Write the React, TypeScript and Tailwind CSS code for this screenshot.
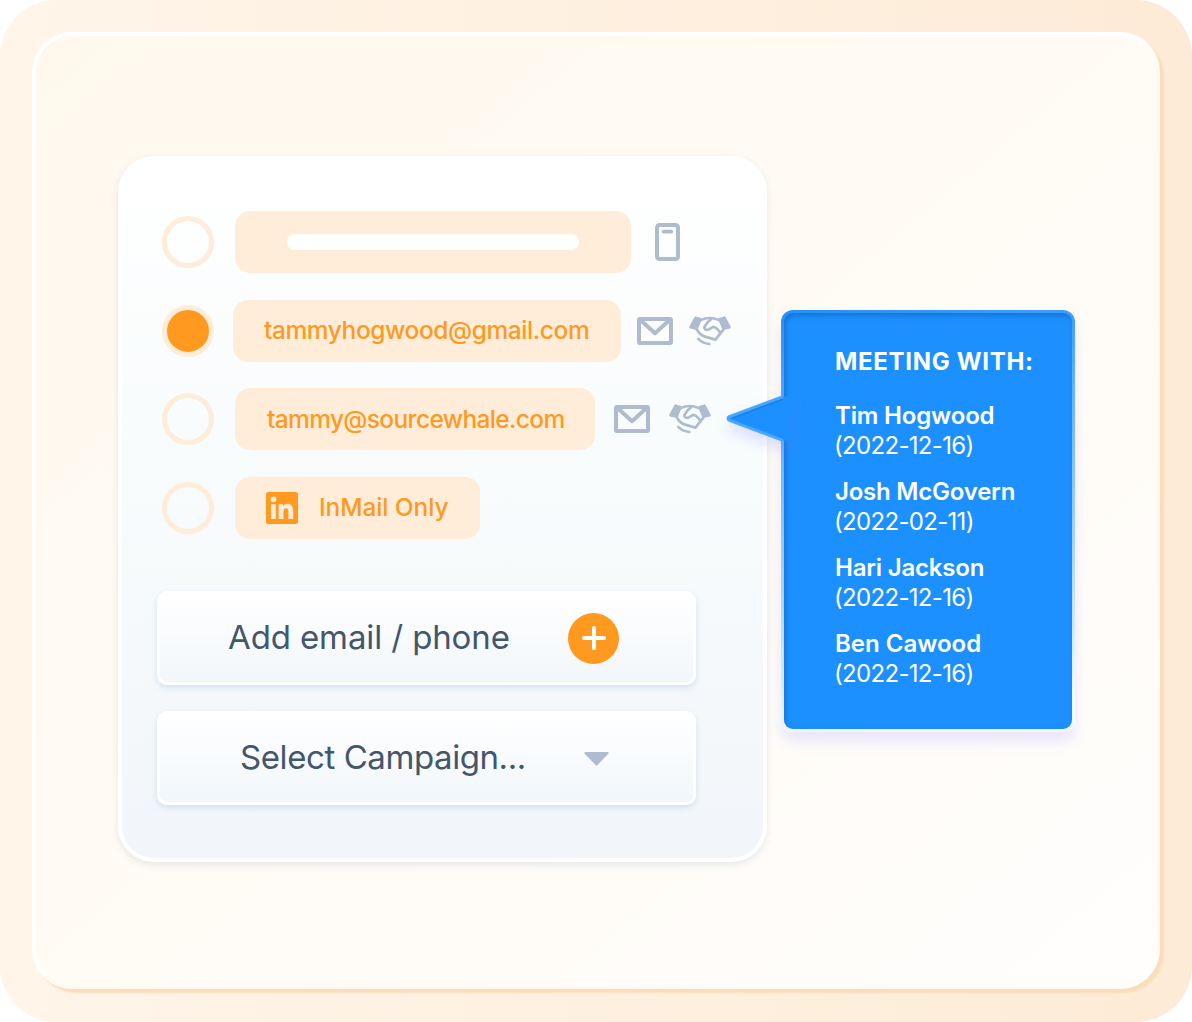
import React from 'react';

const icon = '#afbccf';

function Phone() {
  return (
    <svg className="block h-[38px] w-[25px]" viewBox="0 0 25 38" fill="none" stroke={icon}>
      <rect x="2" y="2" width="21" height="34" rx="2.5" strokeWidth="4" />
      <path d="M8.6 8.6h7.6" strokeWidth="3.8" strokeLinecap="round" />
    </svg>
  );
}

function Mail() {
  return (
    <svg className="block h-[28px] w-[36px]" viewBox="0 0 36 28" fill="none" stroke={icon} strokeWidth="4" strokeLinejoin="round">
      <rect x="2" y="2" width="32" height="24" rx="1" />
      <path d="M4 3.5l14 12.7L32 3.5" />
    </svg>
  );
}

function Handshake() {
  return (
    <svg className="block h-[30px] w-[42px]" viewBox="0 0 42 30" fill="none" stroke={icon} strokeWidth="2.5" strokeLinecap="round" strokeLinejoin="round">
      <path d="M6.6 1.6L11.6 3.2L7.6 12.8L1.4 11.2Z" fill={icon} />
      <path d="M35.4 1.6L30.4 3.2L34.4 12.8L40.6 11.2Z" fill={icon} />
      <path d="M11.8 4.2Q16 2 20.5 2T30 4.2" />
      <path d="M21.8 3.4Q19 5.4 15.8 10.2c-1.4 2.8 1.6 4.4 4 3.2l4.4-2.6c3.2-.4 4.2 2.6 6.8 5.4" strokeWidth="2.7" />
      <path d="M7.8 13.4C9.6 17 13 19.6 16 20.6L26.4 23.6L34.4 13.6" strokeWidth="2.7" />
      <path d="M9.2 22.8c3.1 3.2 6.6 4.6 11.2 5.2" />
    </svg>
  );
}

function Radio({ selected = false }: { selected?: boolean }) {
  return (
    <div className={selected ? 'size-[52px] shrink-0 rounded-full border-[5px] border-[#ffedda] bg-[#ff991f]' : 'size-[52px] shrink-0 rounded-full border-[5px] border-[#ffedda]'} />
  );
}

const pill = 'flex h-[62px] items-center rounded-[15px] bg-[#ffedda] text-[24.5px] font-medium text-[#ff991f]';
const field = 'flex h-[94px] w-[539px] items-center rounded-[10px] border-[3px] border-white bg-linear-to-b from-white to-[#f2f7fb] text-[33px] text-[#44566c] shadow-[0_3px_6px_rgba(150,185,220,0.35)]';

const meetings = [
  { name: 'Tim Hogwood', date: '(2022-12-16)', nameClass: 'tracking-[-0.17px]' },
  { name: 'Josh McGovern', date: '(2022-02-11)', nameClass: 'tracking-[-0.22px]' },
  { name: 'Hari Jackson', date: '(2022-12-16)', nameClass: 'tracking-[-0.2px]' },
  { name: 'Ben Cawood', date: '(2022-12-16)', nameClass: 'tracking-[0px]' },
];

function MeetingCallout() {
  return (
    <aside className="absolute top-[310px] left-[781px] h-[422px] w-[294px] rounded-[12px] bg-[linear-gradient(170deg,#258ffb_0%,#60aeff_25%,#a9d3ff_60%,#f4f9ff_92%)] p-[3px] shadow-[0_10px_14px_rgba(105,110,255,0.15)]">
      <div className="h-full rounded-[9px] bg-[#1d90ff] pt-[34px] pl-[51px] text-[24px] leading-[30px] text-white shadow-[inset_2px_3px_5px_rgba(0,75,145,0.36)]">
        <h2 className="mb-[24px] h-[30px] whitespace-nowrap font-bold"><span className="tracking-[0.68px]">MEETING WITH:</span></h2>
        <div className="flex flex-col gap-4">
          {meetings.map((m) => (
            <div key={m.name} className="whitespace-nowrap">
              <div className="font-semibold"><span className={m.nameClass}>{m.name}</span></div>
              <div className="-ml-px"><span className="tracking-[-0.68px]">{m.date}</span></div>
            </div>
          ))}
        </div>
      </div>
      <svg className="absolute top-[82px] left-[-56px] h-[62px] w-[68px] overflow-visible drop-shadow-[0_8px_7px_rgba(105,110,255,0.2)]" viewBox="0 0 68 62" fill="none">
        <path d="M58 4.6L4.5 24.5Q1.5 26.5 4.5 28.5L58 48.4H67V4.6Z" fill="#1d90ff" />
        <path d="M58 6.5L7 25.5" stroke="#0c75d8" strokeOpacity="0.45" strokeWidth="3" />
        <path d="M58 4.6L4.5 24.5Q1.5 26.5 4.5 28.5L58 48.4" stroke="#4ba6ff" strokeWidth="3" />
      </svg>
    </aside>
  );
}

export default function App() {
  return (
    <main className="relative h-[1022px] w-[1192px] overflow-hidden bg-white font-['Inter',sans-serif]">
      <div className="h-full rounded-[56px] bg-linear-to-r from-[#fff5e9] to-[#fdebd7] p-8">
        <section className="h-[957px] w-[1128px] rounded-[40px] border-[4px] border-t-white border-r-transparent border-b-transparent border-l-white bg-linear-to-br from-[#fff8ed] to-[#fffefd] px-[82px] pt-[120px] shadow-[4px_4px_2px_#f8debb]">
          <div className="h-[706px] w-[649px] rounded-[36px] border-[4px] border-t-[3px] border-white bg-linear-to-b from-white via-[#f7fbfc] to-[#f2f6fa] pt-[51px] pl-[35px] shadow-[0_3px_7px_rgba(80,120,150,0.15)]">
            <div className="flex flex-col gap-[26px] pl-[5px]">
              <div className="flex h-[63px] items-center">
                <Radio />
                <div className={`${pill} ml-[21px] w-[396px] justify-center`}><div className="h-4 w-[292px] rounded-full bg-white" /></div>
                <div className="ml-6"><Phone /></div>
              </div>
              <div className="flex h-[63px] items-center">
                <Radio selected />
                <div className={`${pill} ml-[19px] w-[388px] pl-[31px]`}><span className="tracking-[-0.42px]">tammyhogwood@gmail.com</span></div>
                <div className="ml-4"><Mail /></div><div className="ml-4"><Handshake /></div>
              </div>
              <div className="flex h-[62px] items-center">
                <Radio />
                <div className={`${pill} ml-[21px] w-[360px] pl-[32px]`}><span className="tracking-[-0.65px]">tammy@sourcewhale.com</span></div>
                <div className="ml-[19px]"><Mail /></div><div className="ml-[19px]"><Handshake /></div>
              </div>
              <div className="flex h-[63px] items-center">
                <Radio />
                <div className={`${pill} ml-[21px] w-[245px] pl-[31px]`}>
                  <svg className="size-8" viewBox="0 0 32 32"><rect width="32" height="32" rx="2.5" fill="#ff991f" /><circle cx="7.5" cy="7.3" r="2.9" fill="#ffedda" /><path d="M5 12.2h4.8V27H5zM12.6 12.2h4.5v2c2.4-4.1 10.1-3.5 10.1 4.7V27h-4.8v-7.2c0-4.8-5-4.4-5 0V27h-4.8z" fill="#ffedda" /></svg>
                  <span className="ml-[21px] tracking-[-0.1px]">InMail Only</span>
                </div>
              </div>
            </div>
            <div className="mt-[52px] flex flex-col gap-[26px]">
              <div className={field}>
                <div className="w-[340px] pl-[68px] whitespace-nowrap"><span className="tracking-[-0.12px]">Add email / phone</span></div>
                <div className="ml-[68px] flex size-[51px] items-center justify-center rounded-full bg-[#ff991f]"><svg className="size-6" viewBox="0 0 24 24" stroke="white" strokeWidth="4" strokeLinecap="round"><path d="M12 2v20M2 12h20" /></svg></div>
              </div>
              <div className={field}>
                <div className="w-[340px] pl-[80px] whitespace-nowrap"><span className="tracking-[-0.42px]">Select Campaign...</span></div>
                <svg className="mt-px ml-[84px] h-[14px] w-[25px]" viewBox="0 0 25 14" fill={icon}><path d="M1.5 0h22q2 .5.6 2L13.5 13q-1 1-2 0L.9 2Q-.5.5 1.5 0Z" /></svg>
              </div>
            </div>
          </div>
        </section>
      </div>
      <MeetingCallout />
    </main>
  );
}
